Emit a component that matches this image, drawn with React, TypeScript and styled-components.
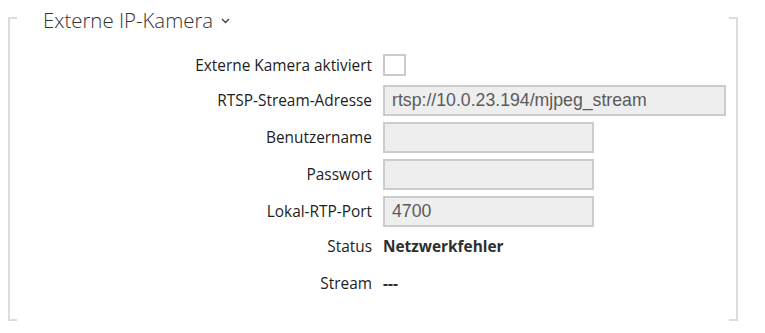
import React from "react";
import styled, { createGlobalStyle } from "styled-components";

const Global = createGlobalStyle`
  html, body { margin: 0; padding: 0; background: #fff; }
  body { font-family: "Open Sans", "Noto Sans", sans-serif; }
  * { box-sizing: border-box; }
`;

const Section = styled.section`
  position: relative;
  margin: 0 27px 0 8px;
  height: 321px;
  &::before, &::after {
    content: "";
    position: absolute;
    top: 17px;
    bottom: 0;
    width: 7px;
    border: 2px solid #dcdcdc;
  }
  &::before { left: 0; border-right: none; }
  &::after { right: 0; border-left: none; }
`;

const Header = styled.h2`
  margin: 0;
  padding: 6px 0 0 35px;
  display: flex;
  align-items: center;
  gap: 8px;
  height: 34px;
  font-size: 20.4px;
  font-weight: 300;
  line-height: 28px;
  color: #333;
`;

const Form = styled.div`
  display: flex;
  flex-direction: column;
  margin-top: 20px;
`;

const Row = styled.div<{ $top: number; $h: number }>`
  display: grid;
  grid-template-columns: 364px 1fr;
  column-gap: 11px;
  align-items: center;
  height: ${(p) => p.$h}px;
  margin-top: ${(p) => p.$top}px;
`;

const Label = styled.span`
  text-align: right;
  font-size: 15.4px;
  color: #1e1e1e;
  white-space: nowrap;
`;

const Checkbox = styled.span`
  display: block;
  width: 23px;
  height: 22px;
  border: 2px solid #cacaca;
  background: #fff;
`;

const TextInput = styled.div<{ $w: number }>`
  width: ${(p) => p.$w}px;
  height: 31px;
  border: 2px solid #cccccc;
  background: #eeeeee;
  padding: 0 7px;
  display: flex;
  align-items: center;
  font-family: "Liberation Sans", Arial, sans-serif;
  font-size: 17.7px;
  color: #5a5a5a;
  white-space: nowrap;
`;

const Value = styled.span`
  font-size: 15.4px;
  font-weight: 700;
  color: #2e2e2e;
`;

const Chevron = () => (
  <svg width="9" height="6" viewBox="0 0 9 6" style={{ marginTop: 2 }}>
    <path d="M1 1 L4.5 4.5 L8 1" fill="none" stroke="#444" strokeWidth="1.4" />
  </svg>
);

export default function App() {
  return (
    <>
      <Global />
      <Section>
        <Header>
          Externe IP-Kamera <Chevron />
        </Header>
        <Form>
          <Row $top={0} $h={22}>
            <Label>Externe Kamera aktiviert</Label>
            <Checkbox />
          </Row>
          <Row $top={9} $h={31}>
            <Label>RTSP-Stream-Adresse</Label>
            <TextInput $w={343}>rtsp://10.0.23.194/mjpeg_stream</TextInput>
          </Row>
          <Row $top={6} $h={31}>
            <Label>Benutzername</Label>
            <TextInput $w={211} />
          </Row>
          <Row $top={6} $h={31}>
            <Label>Passwort</Label>
            <TextInput $w={211} />
          </Row>
          <Row $top={6} $h={31}>
            <Label>Lokal-RTP-Port</Label>
            <TextInput $w={211}>4700</TextInput>
          </Row>
          <Row $top={9} $h={20}>
            <Label>Status</Label>
            <Value>Netzwerkfehler</Value>
          </Row>
          <Row $top={17} $h={20}>
            <Label>Stream</Label>
            <Value>---</Value>
          </Row>
        </Form>
      </Section>
    </>
  );
}
